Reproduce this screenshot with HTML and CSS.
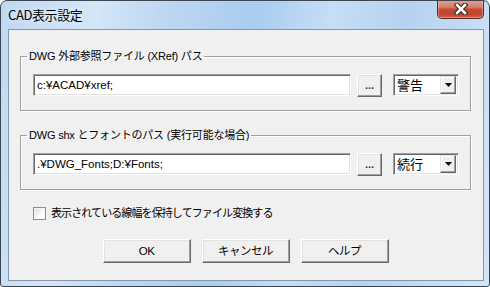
FILE: index.html
```html
<!DOCTYPE html>
<html lang="ja">
<head>
    <meta charset="UTF-8">
    <meta name="viewport" content="width=device-width, initial-scale=1.0">
    <title>CAD表示設定</title>
    <link rel="stylesheet" href="styles.css">
</head>
<body>
    <div class="window">
        <div class="titlebar">
            <span class="title">CAD表示設定</span>
            <button class="close" title="閉じる">
                <svg width="14" height="12" viewBox="0 0 14 12">
                    <path d="M3 2 L11 10 M11 2 L3 10" stroke="#3b2a28" stroke-width="4.8" stroke-linecap="square"/>
                    <path d="M3 2 L11 10 M11 2 L3 10" stroke="#ffffff" stroke-width="2.6" stroke-linecap="square"/>
                </svg>
            </button>
        </div>
        <div class="client">
            <fieldset class="group">
                <legend>DWG 外部参照ファイル (XRef) パス</legend>
                <div class="path-row">
                    <input class="path" type="text" value="c:¥ACAD¥xref;">
                    <button class="btn browse">...</button>
                    <div class="combo">
                        <span class="combo-value">警告</span>
                        <span class="combo-drop"><svg width="7" height="4" viewBox="0 0 7 4"><path d="M0 0 H7 L3.5 4 Z" fill="#000"/></svg></span>
                    </div>
                </div>
            </fieldset>
            <fieldset class="group">
                <legend>DWG shx とフォントのパス (実行可能な場合)</legend>
                <div class="path-row">
                    <input class="path" type="text" value=".¥DWG_Fonts;D:¥Fonts;">
                    <button class="btn browse">...</button>
                    <div class="combo">
                        <span class="combo-value">続行</span>
                        <span class="combo-drop"><svg width="7" height="4" viewBox="0 0 7 4"><path d="M0 0 H7 L3.5 4 Z" fill="#000"/></svg></span>
                    </div>
                </div>
            </fieldset>
            <label class="check-row"><span class="check"></span>表示されている線幅を保持してファイル変換する</label>
            <div class="actions">
                <button class="btn action">OK</button>
                <button class="btn action">キャンセル</button>
                <button class="btn action">ヘルプ</button>
            </div>
        </div>
    </div>
</body>
</html>
```

FILE: styles.css
```css
body { margin: 0; font-family: "Liberation Sans", "Noto Sans CJK JP", sans-serif; font-size: 11px; letter-spacing: -0.5px; color: #000; background: #fff; }
.window { width: 490px; height: 287px; box-sizing: border-box; display: flex; flex-direction: column; border: 1px solid #3c4650; border-radius: 7px 7px 3px 3px; background: linear-gradient(100deg, #bfd8f2 0%, #d4e6f8 18%, #bcd6f1 32%, #a9ccf0 48%, #c6def6 62%, #b6d2f0 76%, #d2e6fa 100%); overflow: hidden; }
.titlebar { height: 28px; flex: none; display: flex; justify-content: space-between; align-items: flex-start; }
.title { padding: 6px 0 0 7px; font-family: "Noto Sans CJK JP", sans-serif; font-size: 13px; letter-spacing: -0.4px; line-height: 16px; color: #000; text-shadow: 0 0 6px rgba(255, 255, 255, 0.9); }
.close { width: 47px; height: 19px; margin: -1px 5px 0 0; padding: 0; display: flex; align-items: center; justify-content: center; border: 1px solid #5a2a22; border-top: none; border-radius: 0 0 5px 5px; background: linear-gradient(#e3a393 0%, #d77e6a 40%, #c24a32 52%, #c0462e 80%, #d0624a 100%); box-shadow: inset 0 0 0 1px rgba(255, 200, 190, 0.45); }
.client { flex: 1; margin: 0 5px 5px 7px; border: 1px solid #8398ad; background: #f0f0f0; padding: 19px 12px 0 11px; display: flex; flex-direction: column; }
.group { margin: 0; padding: 11px 11px 13px 12px; border: 1px solid #a0a0a0; box-shadow: 1px 1px 0 #fff, inset 1px 1px 0 #fff; }
.group + .group { margin-top: 17px; }
.group legend { padding: 0 2px; margin-left: -6px; line-height: 14px; letter-spacing: -0.2px; }
.path-row { display: flex; align-items: flex-start; }
.path { flex: 1; min-width: 0; height: 22px; box-sizing: border-box; margin: 0; padding: 0 3px; font: inherit; font-size: 11.5px; letter-spacing: 0; color: #000; background: #fff; border: 1px solid; border-color: #a0a0a0 #fff #fff #a0a0a0; box-shadow: inset 1px 1px 0 #696969, inset -1px -1px 0 #e3e3e3; outline: none; }
.btn { margin: 0; padding: 0; font: inherit; letter-spacing: inherit; color: #000; background: #f0f0f0; box-sizing: border-box; border: 1px solid; border-color: #fff #696969 #696969 #fff; box-shadow: inset -1px -1px 0 #a0a0a0, inset 1px 1px 0 #e3e3e3; }
.browse { width: 25px; height: 23px; margin-left: 6px; color: #203870; font-weight: bold; letter-spacing: 0; line-height: 14px; padding-bottom: 2px; }
.combo { width: 66px; height: 22px; margin-left: 11px; box-sizing: border-box; display: flex; align-items: center; background: #fff; border: 1px solid; border-color: #a0a0a0 #fff #fff #a0a0a0; box-shadow: inset 1px 1px 0 #696969, inset -1px -1px 0 #e3e3e3; padding: 1px 2px 1px 2px; }
.combo-value { flex: 1; padding-left: 1px; font-family: "Noto Sans CJK JP", sans-serif; font-size: 13px; letter-spacing: 0; line-height: 16px; }
.combo-drop { width: 16px; height: 18px; box-sizing: border-box; display: flex; align-items: center; justify-content: center; background: #f0f0f0; border: 1px solid; border-color: #e3e3e3 #696969 #696969 #e3e3e3; box-shadow: inset -1px -1px 0 #a0a0a0, inset 1px 1px 0 #fff; }
.check-row { margin: 16px 0 0 13px; display: flex; align-items: center; gap: 5px; line-height: 15px; letter-spacing: -0.9px; }
.check { width: 13px; height: 13px; box-sizing: border-box; border: 1px solid #8e8f8f; background: linear-gradient(135deg, #dcdcdc, #fff 70%); box-shadow: inset 0 0 0 1px #f4f4f4; }
.actions { margin-top: 18px; display: flex; justify-content: center; gap: 11px; }
.action { width: 88px; height: 24px; line-height: 20px; font-size: 11.5px; }
```
